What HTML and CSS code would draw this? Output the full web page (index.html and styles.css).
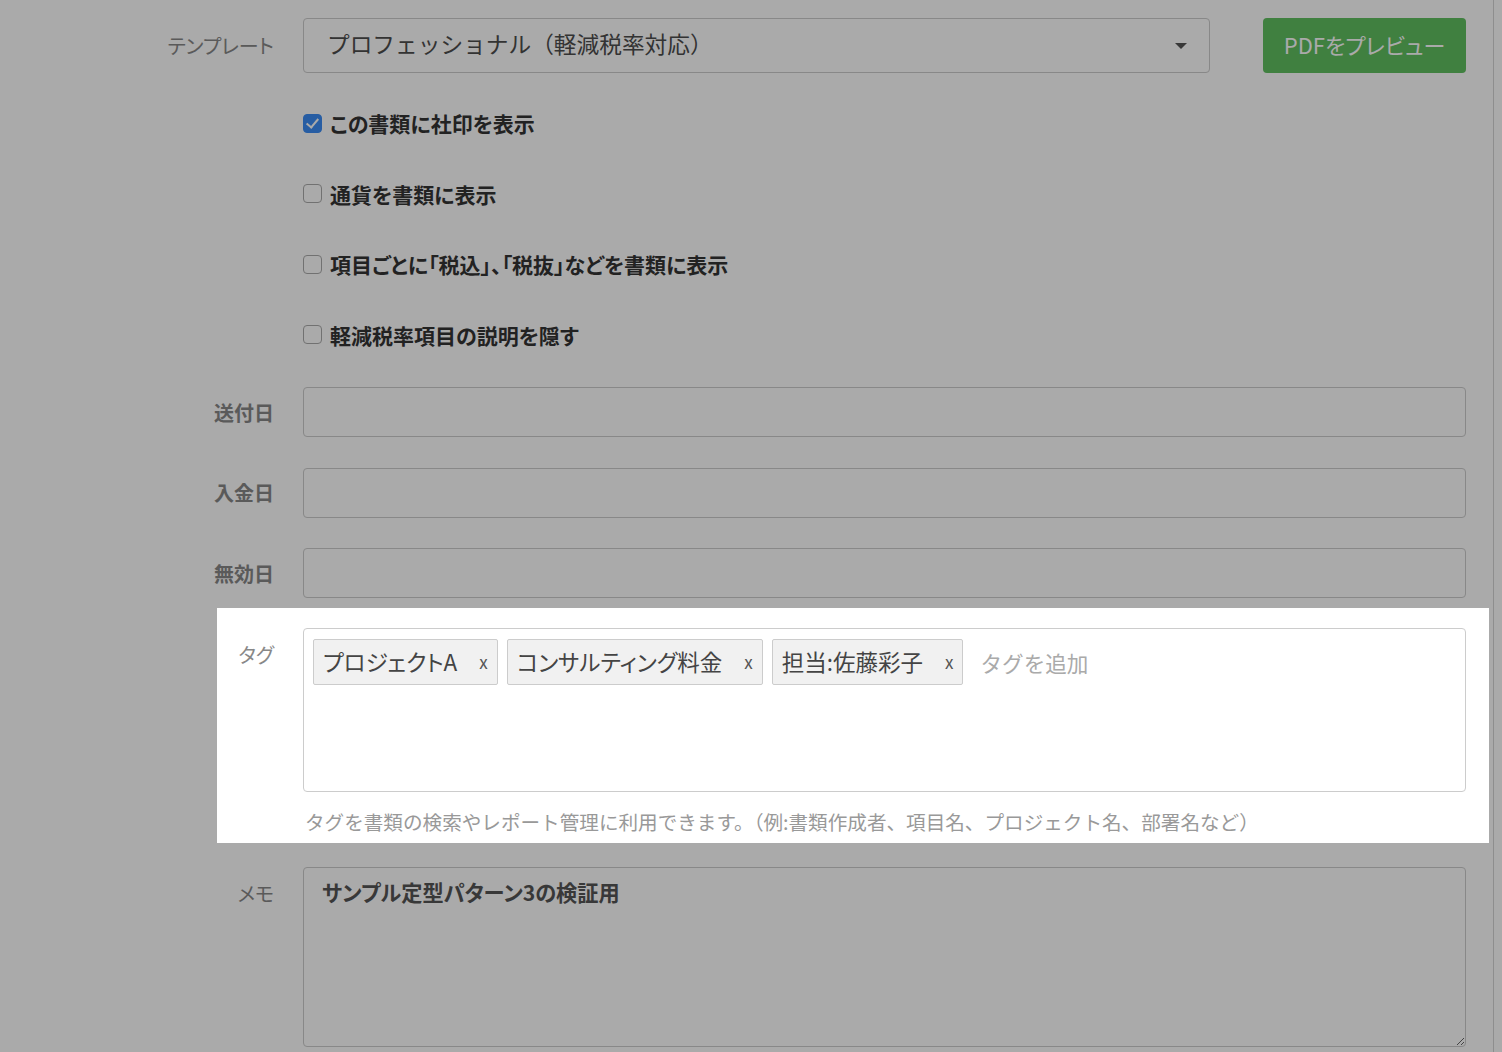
FILE: index.html
```html
<!DOCTYPE html>
<html lang="ja">
<head>
    <meta charset="UTF-8">
    <meta name="viewport" content="width=device-width, initial-scale=1.0">
    <title>書類設定</title>
    <link rel="stylesheet" href="styles.css">
</head>
<body>

    <div class="form">

        <!-- Template -->
        <div class="form-row">
            <label class="form-label">テンプレート</label>
            <div class="template-controls">
                <div class="select">
                    <span>プロフェッショナル（軽減税率対応）</span>
                    <span class="select-caret"></span>
                </div>
                <button class="preview-btn">PDFをプレビュー</button>
            </div>
        </div>

        <!-- Options -->
        <div class="form-row options">
            <div></div>
            <div>
                <label class="option"><span class="checkbox checked"></span>この書類に社印を表示</label>
                <label class="option"><span class="checkbox"></span>通貨を書類に表示</label>
                <label class="option"><span class="checkbox"></span>項目ごとに「税込」、「税抜」などを書類に表示</label>
                <label class="option"><span class="checkbox"></span>軽減税率項目の説明を隠す</label>
            </div>
        </div>

        <!-- Dates -->
        <div class="form-row date-row">
            <label class="form-label strong">送付日</label>
            <div class="text-input"></div>
        </div>
        <div class="form-row date-row">
            <label class="form-label strong">入金日</label>
            <div class="text-input"></div>
        </div>
        <div class="form-row date-row">
            <label class="form-label strong">無効日</label>
            <div class="text-input"></div>
        </div>

        <!-- Tags (highlighted by the guide) -->
        <div class="form-row spotlight">
            <label class="form-label top">タグ</label>
            <div>
                <div class="tag-box">
                    <span class="tag">プロジェクトA<span class="tag-remove">x</span></span>
                    <span class="tag">コンサルティング料金<span class="tag-remove">x</span></span>
                    <span class="tag">担当:佐藤彩子<span class="tag-remove">x</span></span>
                    <input class="tag-input" type="text" placeholder="タグを追加">
                </div>
                <p class="help">タグを書類の検索やレポート管理に利用できます。（例:書類作成者、項目名、プロジェクト名、部署名など）</p>
            </div>
        </div>

        <!-- Memo -->
        <div class="form-row memo-row">
            <label class="form-label top">メモ</label>
            <textarea class="memo">サンプル定型パターン3の検証用</textarea>
        </div>
    </div>

    <div class="guide-overlay"></div>

</body>
</html>
```

FILE: styles.css
```css
body {
    margin: 0;
    padding: 0;
    background-color: #fff;
    font-family: "Noto Sans CJK JP", "Noto Sans", sans-serif;
    color: #333;
    overflow: hidden;
}
.form {
    width: 1494px;
    box-sizing: border-box;
    min-height: 100vh;
    padding: 18px 27px 0 94px;
    border-right: 1px solid #d6d6d6;
}
.form-row {
    display: grid;
    grid-template-columns: 180px 1fr;
    column-gap: 29px;
    align-items: center;
}
.form-label {
    text-align: right;
    font-size: 20px;
    color: #888;
    font-feature-settings: "palt";
}
.form-label.strong {
    font-weight: 700;
}
.form-label.top {
    align-self: start;
    padding-top: 14px;
    line-height: 26px;
}
.template-controls {
    display: flex;
    gap: 53px;
}
.select {
    flex: 1;
    height: 55px;
    box-sizing: border-box;
    border: 1px solid #ccc;
    border-radius: 4px;
    padding: 0 22px 4px 23px;
    display: flex;
    align-items: center;
    justify-content: space-between;
    font-size: 22.7px;
    color: #4d4d4d;
}
.select-caret {
    width: 0;
    height: 0;
    margin-top: 4px;
    border-left: 6px solid transparent;
    border-right: 6px solid transparent;
    border-top: 6px solid #555;
}
.preview-btn {
    width: 203px;
    height: 55px;
    border: none;
    border-radius: 4px;
    background-color: #60c060;
    color: #fff;
    font-family: inherit;
    font-size: 22px;
    font-feature-settings: "palt";
    padding: 0 0 4px;
}
.options {
    margin-top: 15px;
}
.option {
    height: 70.5px;
    display: flex;
    align-items: center;
    gap: 8px;
    font-size: 21px;
    font-weight: 700;
    color: #333;
    font-feature-settings: "palt";
}
.checkbox {
    width: 17px;
    height: 17px;
    border: 1px solid #aaa;
    border-radius: 4px;
    background-color: #fff;
    position: relative;
}
.checkbox.checked {
    background-color: #3b8cf5;
    border-color: #3b8cf5;
}
.checkbox.checked::after {
    content: "";
    position: absolute;
    left: 5px;
    top: 1px;
    width: 5px;
    height: 10px;
    border-right: 2px solid #fff;
    border-bottom: 2px solid #fff;
    transform: rotate(40deg);
}
.date-row {
    margin-top: 30.5px;
}
.options + .date-row {
    margin-top: 17px;
}
.text-input {
    height: 50px;
    box-sizing: border-box;
    border: 1px solid #ccc;
    border-radius: 4px;
}
.spotlight {
    position: relative;
    z-index: 20;
    background-color: #fff;
    grid-template-columns: 57px 1fr;
    margin: 10px -23px 0 123px;
    padding: 20px 23px 9px 0;
    align-items: start;
}
.tag-box {
    height: 164px;
    box-sizing: border-box;
    border: 1px solid #ccc;
    border-radius: 4px;
    padding: 10px 9px;
    display: flex;
    flex-wrap: wrap;
    align-content: flex-start;
    gap: 9px;
}
.tag {
    height: 46px;
    box-sizing: border-box;
    display: inline-flex;
    align-items: center;
    padding: 0 9px 2px 9px;
    border: 1px solid #ccc;
    border-radius: 2px;
    background-color: #f1f1f1;
    font-size: 22.5px;
    color: #444;
    font-feature-settings: "palt";
}
.tag-remove {
    margin-left: 22px;
    font-size: 17px;
    color: #555;
}
.tag-input {
    height: 46px;
    border: none;
    outline: none;
    margin-left: 8px;
    padding: 0 0 3px;
    width: 300px;
    font-family: inherit;
    font-size: 21.6px;
    color: #333;
}
.tag-input::placeholder {
    color: #aaa;
}
.help {
    margin: 18px 0 0 2px;
    font-size: 19.6px;
    line-height: 24px;
    color: #999;
}
.memo-row {
    margin-top: 24px;
    align-items: start;
}
.memo {
    height: 180px;
    box-sizing: border-box;
    border: 1px solid #ccc;
    border-radius: 4px;
    padding: 11px 18px 11px 18px;
    font-family: inherit;
    font-size: 21.2px;
    line-height: 26px;
    font-weight: 700;
    color: #555;
    font-feature-settings: "palt";
}
.guide-overlay {
    position: fixed;
    top: 0;
    left: 0;
    right: 0;
    bottom: 0;
    z-index: 10;
    background-color: rgba(0, 0, 0, 0.333);
}
```
